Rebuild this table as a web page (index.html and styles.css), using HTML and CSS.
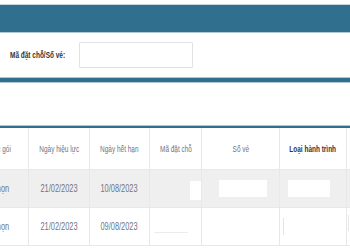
FILE: index.html
```html
<!DOCTYPE html>
<html lang="vi">
<head>
<meta charset="utf-8">
<title>Tra cứu vé</title>
<link rel="stylesheet" href="styles.css">
</head>
<body>
<div class="page">
  <div class="top-gap"></div>
  <div class="title-bar"></div>
  <div class="search-row">
    <label class="search-label" for="code"><span class="tx tx-left">Mã đặt chỗ/Số vé:</span></label>
    <input class="search-input" id="code" type="text">
  </div>
  <div class="divider"></div>
  <div class="spacer"></div>
  <div class="table-wrap">
    <table class="grid">
      <colgroup>
        <col class="c-pkg"><col class="c-from"><col class="c-to"><col class="c-pnr"><col class="c-ticket"><col class="c-route"><col class="c-more">
      </colgroup>
      <thead>
        <tr>
          <th class="pkg"><span class="tx tx-right">Các gói</span></th>
          <th><span class="tx">Ngày hiệu lực</span></th>
          <th><span class="tx">Ngày hết hạn</span></th>
          <th class="left"><span class="tx tx-left">Mã đặt chỗ</span></th>
          <th><span class="tx">Số vé</span></th>
          <th class="strong"><span class="tx">Loại hành trình</span></th>
          <th></th>
        </tr>
      </thead>
      <tbody>
        <tr class="alt">
          <td class="pkg"><span class="tx tx-right">Tùy chọn</span></td>
          <td><span class="tx">21/02/2023</span></td>
          <td><span class="tx">10/08/2023</span></td>
          <td><span class="blank blank-pnr"></span></td>
          <td><span class="blank blank-ticket"></span></td>
          <td><span class="blank blank-route"></span></td>
          <td></td>
        </tr>
        <tr>
          <td class="pkg"><span class="tx tx-right">Tùy chọn</span></td>
          <td><span class="tx">21/02/2023</span></td>
          <td><span class="tx">09/08/2023</span></td>
          <td><span class="ghost-field"></span></td>
          <td></td>
          <td><span class="ghost-bar"></span></td>
          <td><span class="ghost-edge"></span></td>
        </tr>
      </tbody>
    </table>
  </div>
</div>
</body>
</html>
```

FILE: styles.css
```css
html, body {
  margin: 0;
  padding: 0;
  background: #ffffff;
}

.page {
  width: 350px;
  height: 250px;
  overflow: hidden;
  font-family: "Liberation Sans", Arial, sans-serif;
}

/* condensed lettering: the face is squeezed horizontally */
.tx {
  display: inline-block;
  white-space: nowrap;
  transform: scaleX(0.76);
  transform-origin: center;
}

.tx-left { transform-origin: left center; }
.tx-right { transform-origin: right center; }

.top-gap {
  height: 4px;
  border-bottom: 1px solid #c7d5de;
}

.title-bar {
  height: 27px;
  background: #306f8d;
  border-bottom: 1px solid #b4c8d4;
}

.search-row {
  height: 44px;
  display: flex;
  align-items: center;
  padding-left: 10px;
  box-sizing: border-box;
}

.search-label {
  display: inline-block;
  width: 53px;
  white-space: nowrap;
  font-size: 9px;
  font-weight: bold;
  color: #2f3338;
}

.search-label .tx {
  transform: scaleX(0.72);
  transform-origin: left center;
}

.search-input {
  margin: 0 0 0 16px;
  width: 114px;
  height: 26px;
  box-sizing: border-box;
  border: 1px solid #e2e2e2;
  border-radius: 1px;
  background: #fff;
  padding: 0;
}

.divider {
  height: 4px;
  background: #306f8d;
  border-top: 1px solid #b4c8d4;
  border-bottom: 1px solid #b4c8d4;
}

.spacer {
  height: 42px;
}

.table-wrap {
  border-top: 1px solid #b4c8d4;
}

.grid {
  border-collapse: collapse;
  table-layout: fixed;
  width: 420px;
  margin-left: -40px;
  border-top: 2px solid #306f8d;
}

.c-pkg { width: 68px; }
.c-from { width: 61px; }
.c-to { width: 60px; }
.c-pnr { width: 52px; }
.c-ticket { width: 78px; }
.c-route { width: 67px; }
.c-more { width: 34px; }

.grid th,
.grid td {
  border-left: 1px solid #e6e8eb;
  border-bottom: 1px solid #e6e8eb;
  text-align: center;
  vertical-align: middle;
  padding: 0;
  color: #6c7483;
  white-space: nowrap;
  overflow: hidden;
}

.grid th {
  height: 41px;
  font-size: 8.5px;
  font-weight: normal;
}

.grid th.left {
  text-align: left;
  padding-left: 10px;
}

.grid th.strong {
  color: #30343a;
  font-weight: bold;
}

.grid td {
  height: 37px;
  font-size: 10px;
  color: #6e7686;
}

.grid td .tx {
  transform: scaleX(0.74);
}

.grid .pkg {
  text-align: right;
  padding-right: 17px;
}

.grid td.pkg {
  padding-right: 19px;
}

.grid .pkg .tx {
  transform-origin: right center;
}

.grid tr.alt td {
  background: #efefef;
}

.blank {
  display: block;
  background: #ffffff;
}

.blank-pnr {
  width: 11px;
  height: 19px;
  margin: 4px 0 0 40px;
}

.blank-ticket {
  width: 48px;
  height: 17px;
  margin: -1px 0 0 17px;
}

.blank-route {
  width: 42px;
  height: 17px;
  margin: -1px 0 0 8px;
}

.ghost-field {
  display: block;
  margin: 0 0 0 4px;
  height: 12px;
  border-bottom: 1px solid #ececec;
  width: 34px;
}

.ghost-bar {
  display: block;
  width: 1px;
  height: 17px;
  background: #e4e4e4;
  margin-left: 3px;
}

.ghost-edge {
  display: block;
  width: 1px;
  height: 16px;
  background: #e8e8e8;
  margin: -8px 0 0 1px;
}
```
